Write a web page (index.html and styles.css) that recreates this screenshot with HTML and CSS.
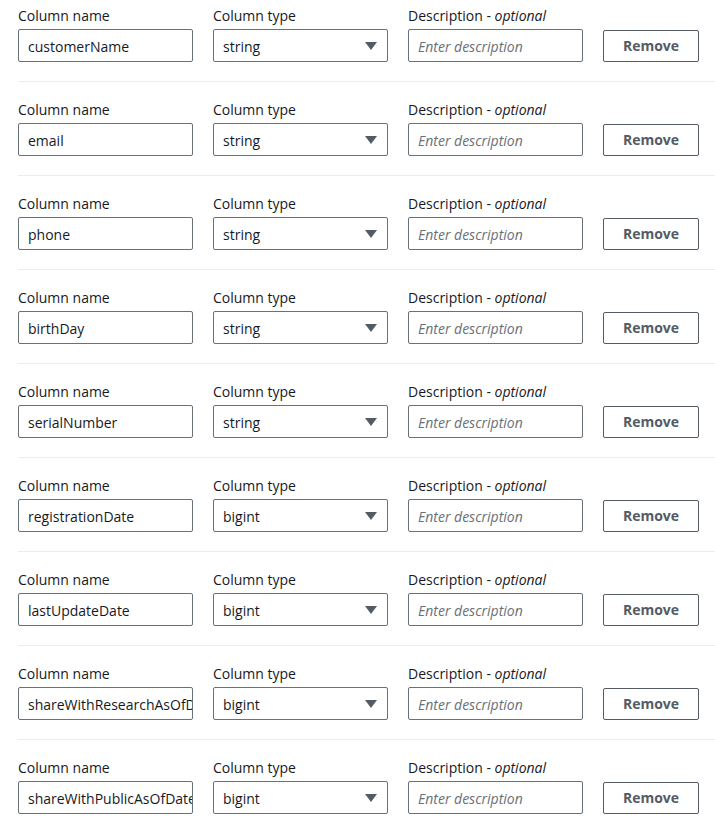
FILE: index.html
```html
<!DOCTYPE html>
<html>
<head>
<meta charset="utf-8">
<link rel="stylesheet" href="styles.css">
</head>
<body>
<div class="list">
  <div class="row">
    <div class="field"><div class="label">Column name</div><div class="input">customerName</div></div>
    <div class="field"><div class="label">Column type</div><div class="input select"><span>string</span><svg class="caret" width="12" height="10" viewBox="0 0 12 10"><polygon points="0,1 12,1 6,9" /></svg></div></div>
    <div class="field"><div class="label">Description - <i>optional</i></div><div class="input placeholder">Enter description</div></div>
    <div class="btnwrap"><div class="button">Remove</div></div>
  </div>
  <div class="row">
    <div class="field"><div class="label">Column name</div><div class="input">email</div></div>
    <div class="field"><div class="label">Column type</div><div class="input select"><span>string</span><svg class="caret" width="12" height="10" viewBox="0 0 12 10"><polygon points="0,1 12,1 6,9" /></svg></div></div>
    <div class="field"><div class="label">Description - <i>optional</i></div><div class="input placeholder">Enter description</div></div>
    <div class="btnwrap"><div class="button">Remove</div></div>
  </div>
  <div class="row">
    <div class="field"><div class="label">Column name</div><div class="input">phone</div></div>
    <div class="field"><div class="label">Column type</div><div class="input select"><span>string</span><svg class="caret" width="12" height="10" viewBox="0 0 12 10"><polygon points="0,1 12,1 6,9" /></svg></div></div>
    <div class="field"><div class="label">Description - <i>optional</i></div><div class="input placeholder">Enter description</div></div>
    <div class="btnwrap"><div class="button">Remove</div></div>
  </div>
  <div class="row">
    <div class="field"><div class="label">Column name</div><div class="input">birthDay</div></div>
    <div class="field"><div class="label">Column type</div><div class="input select"><span>string</span><svg class="caret" width="12" height="10" viewBox="0 0 12 10"><polygon points="0,1 12,1 6,9" /></svg></div></div>
    <div class="field"><div class="label">Description - <i>optional</i></div><div class="input placeholder">Enter description</div></div>
    <div class="btnwrap"><div class="button">Remove</div></div>
  </div>
  <div class="row">
    <div class="field"><div class="label">Column name</div><div class="input">serialNumber</div></div>
    <div class="field"><div class="label">Column type</div><div class="input select"><span>string</span><svg class="caret" width="12" height="10" viewBox="0 0 12 10"><polygon points="0,1 12,1 6,9" /></svg></div></div>
    <div class="field"><div class="label">Description - <i>optional</i></div><div class="input placeholder">Enter description</div></div>
    <div class="btnwrap"><div class="button">Remove</div></div>
  </div>
  <div class="row">
    <div class="field"><div class="label">Column name</div><div class="input">registrationDate</div></div>
    <div class="field"><div class="label">Column type</div><div class="input select"><span>bigint</span><svg class="caret" width="12" height="10" viewBox="0 0 12 10"><polygon points="0,1 12,1 6,9" /></svg></div></div>
    <div class="field"><div class="label">Description - <i>optional</i></div><div class="input placeholder">Enter description</div></div>
    <div class="btnwrap"><div class="button">Remove</div></div>
  </div>
  <div class="row">
    <div class="field"><div class="label">Column name</div><div class="input">lastUpdateDate</div></div>
    <div class="field"><div class="label">Column type</div><div class="input select"><span>bigint</span><svg class="caret" width="12" height="10" viewBox="0 0 12 10"><polygon points="0,1 12,1 6,9" /></svg></div></div>
    <div class="field"><div class="label">Description - <i>optional</i></div><div class="input placeholder">Enter description</div></div>
    <div class="btnwrap"><div class="button">Remove</div></div>
  </div>
  <div class="row">
    <div class="field"><div class="label">Column name</div><div class="input">shareWithResearchAsOfDate</div></div>
    <div class="field"><div class="label">Column type</div><div class="input select"><span>bigint</span><svg class="caret" width="12" height="10" viewBox="0 0 12 10"><polygon points="0,1 12,1 6,9" /></svg></div></div>
    <div class="field"><div class="label">Description - <i>optional</i></div><div class="input placeholder">Enter description</div></div>
    <div class="btnwrap"><div class="button">Remove</div></div>
  </div>
  <div class="row last">
    <div class="field"><div class="label">Column name</div><div class="input">shareWithPublicAsOfDate</div></div>
    <div class="field"><div class="label">Column type</div><div class="input select"><span>bigint</span><svg class="caret" width="12" height="10" viewBox="0 0 12 10"><polygon points="0,1 12,1 6,9" /></svg></div></div>
    <div class="field"><div class="label">Description - <i>optional</i></div><div class="input placeholder">Enter description</div></div>
    <div class="btnwrap"><div class="button">Remove</div></div>
  </div>
</div>
</body>
</html>
```
FILE: styles.css
```css
html, body {
  margin: 0;
  padding: 0;
  background: #ffffff;
}
body {
  font-family: "Open Sans", "Noto Sans", sans-serif;
  font-size: 14px;
  color: #16191f;
  overflow: hidden;
}
.list {
  margin-left: 18px;
}
.row {
  display: flex;
  gap: 20px;
  padding: 18px 0 19px 0;
  border-bottom: 1px solid #eaeded;
}
.row:first-child {
  padding-top: 6px;
}
.row.last {
  border-bottom: none;
}
.field {
  width: 175px;
  display: flex;
  flex-direction: column;
  gap: 3px;
}
.label {
  line-height: 20px;
  height: 20px;
  white-space: nowrap;
}
.label i {
  font-style: italic;
}
.input {
  box-sizing: border-box;
  height: 33px;
  border: 1px solid #687078;
  border-radius: 2px;
  padding: 1px 2px 0 9px;
  line-height: 31px;
  white-space: nowrap;
  overflow: hidden;
}
.placeholder {
  font-style: italic;
  color: #687078;
}
.select {
  display: flex;
  justify-content: space-between;
  align-items: center;
  padding-right: 10px;
}
.caret {
  margin-right: 0;
}
.caret polygon {
  fill: #545b64;
}
.btnwrap {
  padding-top: 24px;
}
.button {
  box-sizing: border-box;
  width: 96px;
  height: 32px;
  border: 1px solid #545b64;
  border-radius: 2px;
  font-weight: 700;
  color: #545b64;
  text-align: center;
  line-height: 30px;
}
```
